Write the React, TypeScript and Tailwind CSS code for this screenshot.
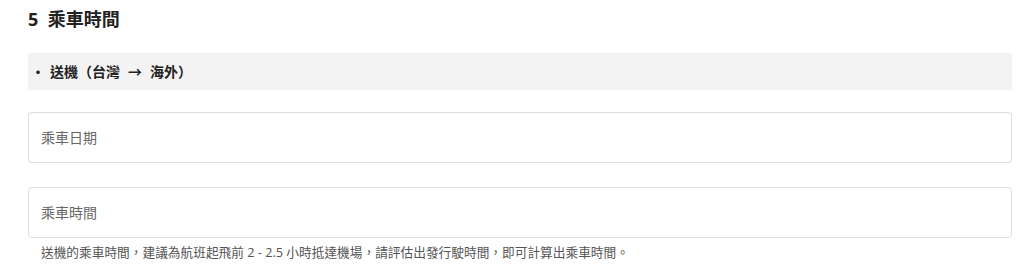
export default function App() {
  return (
    <div className="w-[1024px] h-[271px] bg-white font-['Open_Sans','Noto_Sans_CJK_TC',sans-serif] text-[#333]">
      <div className="pl-[28px] pr-[12px]">
        {/* Section title */}
        <h2 className="pt-[6px] h-[53px] text-[18px] font-bold text-[#222] leading-[26px]">
          5&nbsp; 乘車時間
        </h2>

        {/* Sub heading bar */}
        <div className="h-[37px] bg-[#f3f3f3] flex items-center pl-[3px] text-[14px] font-bold text-[#222]">
          <span>・</span>
          <span className="ml-[5px]">送機（台灣</span>
          <span className="mx-[8px]">→</span>
          <span>海外）</span>
        </div>

        {/* Ride date */}
        <div className="mt-[22px] h-[51px] rounded-[4px] border border-[#dddddd] flex items-center pl-[12px] text-[14px] text-[#666]">
          乘車日期
        </div>

        {/* Ride time */}
        <div className="mt-[24px] h-[51px] rounded-[4px] border border-[#dddddd] flex items-center pl-[12px] text-[14px] text-[#666]">
          乘車時間
        </div>
        <p className="mt-[4px] pl-[13px] text-[12.7px] text-[#555] leading-[20px]">
          送機的乘車時間，建議為航班起飛前 2 - 2.5 小時抵達機場，請評估出發行駛時間，即可計算出乘車時間。
        </p>
      </div>
    </div>
  );
}
